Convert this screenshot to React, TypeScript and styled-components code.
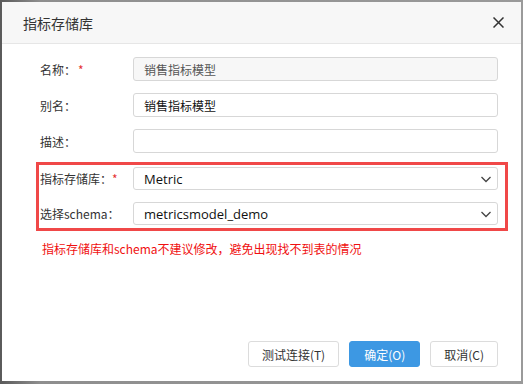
import React from 'react';
import styled, { createGlobalStyle } from 'styled-components';

const GlobalStyle = createGlobalStyle`
  html, body {
    margin: 0;
    padding: 0;
    background: #7d7d7d;
  }
  body {
    font-family: "Noto Sans CJK SC", "Noto Sans", sans-serif;
  }
`;

const Backdrop = styled.div`
  width: 523px;
  height: 384px;
  padding: 2px 2px 3px 2px;
  box-sizing: border-box;
  background: linear-gradient(90deg, #5a5a5a 0px, #8e8e8e 40px, #9a9a9a 100%);
`;

const Dialog = styled.div`
  width: 519px;
  height: 379px;
  background: #fff;
  display: flex;
  flex-direction: column;
  box-sizing: border-box;
`;

const Header = styled.div`
  height: 42px;
  flex: none;
  background: #f7f7f7;
  border-bottom: 1px solid #e6e6e6;
  display: flex;
  align-items: center;
  justify-content: space-between;
  padding: 0 17px 0 21px;
  box-sizing: border-box;
`;

const Title = styled.div`
  font-size: 14px;
  color: #333;
`;

const CloseButton = styled.button`
  border: none;
  background: transparent;
  padding: 0;
  width: 12px;
  height: 12px;
  display: flex;
  align-items: center;
  justify-content: center;
  cursor: pointer;
`;

const Form = styled.div`
  flex: 1;
  padding: 13px 23px 0 38px;
  display: flex;
  flex-direction: column;
  gap: 12px;
`;

const Row = styled.div`
  display: flex;
  align-items: center;
  height: ${({ $h }: { $h?: number }) => ($h ? `${$h}px` : '24px')};
`;

const Label = styled.div`
  width: 93px;
  flex: none;
  font-size: 12px;
  color: #333;
  display: flex;
  align-items: center;
  white-space: nowrap;
`;

const Required = styled.span`
  color: #e53333;
  font-size: 12px;
  margin-left: ${({ $gap }: { $gap?: number }) => `${$gap ?? 0}px`};
`;

const Input = styled.div<{ $disabled?: boolean }>`
  flex: 1;
  height: 100%;
  box-sizing: border-box;
  border: 1px solid #d7d7d7;
  border-radius: 3px;
  background: ${({ $disabled }) => ($disabled ? '#f7f7f7' : '#fff')};
  color: ${({ $disabled }) => ($disabled ? '#555' : '#111')};
  font-size: 12px;
  padding: 0 10px;
  display: flex;
  align-items: center;
`;

const Select = styled(Input)`
  justify-content: space-between;
  padding: 0 5px 0 10px;
  font-family: "Open Sans", "Noto Sans", sans-serif;
  font-size: 13px;
  color: #111;
`;

const Highlight = styled.div`
  margin: -3px -10px 0 -4px;
  border: 3px solid #f04848;
  padding: 2px 7px 3px 1px;
  display: flex;
  flex-direction: column;
  gap: 12px;
`;

const Warning = styled.div`
  font-size: 12px;
  color: #f01010;
  margin-top: -3px;
  margin-left: 2px;
`;

const Footer = styled.div`
  display: flex;
  justify-content: flex-end;
  gap: 10px;
  padding: 0 23px 14px 0;
`;

const Button = styled.button<{ $primary?: boolean }>`
  height: 26px;
  box-sizing: border-box;
  padding: 0 ${({ $primary }) => ($primary ? '14px' : '13px')};
  border-radius: 3px;
  border: 1px solid ${({ $primary }) => ($primary ? '#3d98e3' : '#dcdcdc')};
  background: ${({ $primary }) => ($primary ? '#3d98e3' : '#fff')};
  color: ${({ $primary }) => ($primary ? '#fff' : '#333')};
  font-family: "Noto Sans CJK SC", "Noto Sans", sans-serif;
  font-size: 12px;
  cursor: pointer;
`;

const Chevron = () => (
  <svg width="12" height="12" viewBox="0 0 12 12">
    <path d="M1.5 4 L6 8.5 L10.5 4" fill="none" stroke="#444" strokeWidth="1.3" />
  </svg>
);

export default function App() {
  return (
    <Backdrop>
      <GlobalStyle />
      <Dialog>
        <Header>
          <Title>指标存储库</Title>
          <CloseButton>
            <svg width="11" height="11" viewBox="0 0 11 11">
              <path d="M0.5 0.5 L10.5 10.5 M10.5 0.5 L0.5 10.5" stroke="#333" strokeWidth="1.5" />
            </svg>
          </CloseButton>
        </Header>
        <Form>
          <Row>
            <Label>
              名称：<Required $gap={2}>*</Required>
            </Label>
            <Input $disabled>销售指标模型</Input>
          </Row>
          <Row>
            <Label>别名：</Label>
            <Input>销售指标模型</Input>
          </Row>
          <Row>
            <Label>描述：</Label>
            <Input />
          </Row>
          <Highlight>
            <Row $h={23}>
              <Label>
                指标存储库：<Required>*</Required>
              </Label>
              <Select>
                Metric
                <Chevron />
              </Select>
            </Row>
            <Row $h={23}>
              <Label>选择schema：</Label>
              <Select>
                metricsmodel_demo
                <Chevron />
              </Select>
            </Row>
          </Highlight>
          <Warning>指标存储库和schema不建议修改，避免出现找不到表的情况</Warning>
        </Form>
        <Footer>
          <Button>测试连接(T)</Button>
          <Button $primary>确定(O)</Button>
          <Button>取消(C)</Button>
        </Footer>
      </Dialog>
    </Backdrop>
  );
}
